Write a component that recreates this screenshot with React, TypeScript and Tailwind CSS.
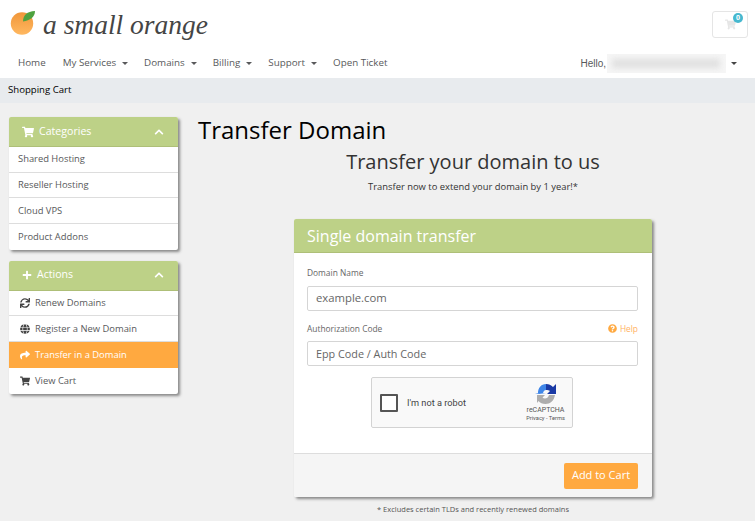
import React from "react";
import { FaShoppingCart, FaChevronUp, FaPlus, FaSync, FaGlobe, FaShare, FaQuestionCircle } from "react-icons/fa";

const NavItem = ({ label, caret, extra }: { label: string; caret?: boolean; extra?: string }) => (
  <span className={"flex items-center text-[9.8px] text-[#58595b] " + (extra ?? "")}>
    {label}
    {caret && <span className="ml-[6px] w-0 h-0 border-x-[3px] border-x-transparent border-t-[3px] border-t-[#58595b]" />}
  </span>
);

const Panel = ({ title, icon, children }: { title: string; icon: React.ReactNode; children: React.ReactNode }) => (
  <div className="w-[169px] bg-white rounded-[2px] shadow-[2px_2px_3px_#888] overflow-hidden">
    <div className="h-[30px] bg-[#bdd187] border-b border-[#aebf78] flex items-center pl-[12px] pr-[14px] text-white text-[10.6px]">
      {icon}
      <span className="flex-1">{title}</span>
      <FaChevronUp className="text-[10px]" />
    </div>
    {children}
  </div>
);

const PanelRow = ({ label, icon, active, last }: { label: string; icon?: React.ReactNode; active?: boolean; last?: boolean }) => (
  <div
    className={
      "h-[25.7px] flex items-center pl-[9px] text-[9.4px] " +
      (active ? "bg-[#ffa940] text-white " : "text-[#58595b] ") +
      (last || active ? "" : "border-b border-[#dddddd]")
    }
  >
    {icon && <span className="w-[17px] shrink-0 flex justify-center pr-[3px] text-[10px] text-[#444]">{icon}</span>}
    {label}
  </div>
);

export default function App() {
  return (
    <div className="min-h-[521px] h-[521px] overflow-hidden bg-[#f0f0f0] font-['Open_Sans',sans-serif]">
      <div className="bg-white h-[78px]">
        <div className="h-[52px] flex items-start justify-between pl-[10px] pr-[7px]">
          <div className="flex items-start pt-[10px]">
            <svg width="28" height="26" viewBox="0 0 28 26">
              <defs>
                <linearGradient id="orangeFill" x1="0" y1="0" x2="0" y2="1">
                  <stop offset="0" stopColor="#f0963a" />
                  <stop offset="1" stopColor="#ffb860" />
                </linearGradient>
              </defs>
              <circle cx="12" cy="13.5" r="11.2" fill="url(#orangeFill)" />
              <path d="M13 11.5 C13 5 17 1.5 25 1 C25 7 20 10.5 13 11.5Z" fill="#4ea23f" />
            </svg>
            <span className="ml-[5px] mt-[-3px] font-['Liberation_Serif',serif] italic text-[27.5px] leading-[36px] text-[#454545]">
              a small orange
            </span>
          </div>
          <div className="relative mt-[11px] w-[36px] h-[27px] border border-[#e5e5e5] rounded-[3px] flex items-center justify-center">
            <FaShoppingCart className="text-[11px] text-[#e6e6e6]" />
            <span className="absolute right-[4px] top-[1px] w-[10px] h-[10px] rounded-full bg-[#46b8cf] text-white text-[7px] leading-[10px] text-center font-bold">
              0
            </span>
          </div>
        </div>
        <div className="flex items-center justify-between h-[22px] pl-[18px] pr-[18px]">
          <div className="flex gap-[16px]">
            <NavItem label="Home" extra="mr-[1px]" />
            <NavItem label="My Services" caret />
            <NavItem label="Domains" caret />
            <NavItem label="Billing" caret />
            <NavItem label="Support" caret />
            <NavItem label="Open Ticket" />
          </div>
          <div className="flex items-center text-[10px] text-[#58595b] font-['Liberation_Sans',sans-serif]">
            Hello,
            <span className="w-[119px] h-[19px] ml-[1px] bg-[#f6f6f6] flex items-center overflow-hidden">
              <span className="block w-[108px] h-[9px] ml-[5px] bg-[#dfdfdf] blur-[3px]" />
            </span>
            <span className="ml-[5px] w-0 h-0 border-x-[3px] border-x-transparent border-t-[3px] border-t-[#444]" />
          </div>
        </div>
      </div>
      <div className="h-[25px] bg-[#e8ebee] flex items-center pl-[8px] text-[9.6px] text-black">Shopping Cart</div>

      <div className="flex pt-[14px] pl-[9px]">
        <div className="flex flex-col gap-[11px] shrink-0">
          <Panel title="Categories" icon={<FaShoppingCart className="text-[12px] mr-[5px] ml-[1px]" />}>
            <PanelRow label="Shared Hosting" />
            <PanelRow label="Reseller Hosting" />
            <PanelRow label="Cloud VPS" />
            <PanelRow label="Product Addons" last />
          </Panel>
          <Panel title="Actions" icon={<FaPlus className="text-[10px] mr-[5px] ml-[1px]" />}>
            <PanelRow label="Renew Domains" icon={<FaSync />} />
            <PanelRow label="Register a New Domain" icon={<FaGlobe />} />
            <PanelRow label="Transfer in a Domain" active icon={<FaShare className="text-white" />} />
            <PanelRow label="View Cart" last icon={<FaShoppingCart />} />
          </Panel>
        </div>

        <div className="ml-[20px] w-[550px]">
          <h1 className="-mt-[2px] text-[24px] leading-[30px] text-black">Transfer Domain</h1>
          <div className="w-[550px] text-center">
            <h2 className="text-[20px] leading-[28px] text-[#333] mt-[3px]">Transfer your domain to us</h2>
            <p className="text-[9.4px] leading-[14px] text-[#333] mt-[4px]">Transfer now to extend your domain by 1 year!*</p>
          </div>
          <div className="ml-[96px] mt-[25px] w-[358px] bg-white rounded-[2px] shadow-[2px_2px_3px_#888] overflow-hidden">
            <div className="h-[34px] bg-[#bdd187] border-b border-[#aebf78] flex items-center pl-[13px] text-white text-[16px]">
              Single domain transfer
            </div>
            <div className="h-[201px] pl-[13px] pr-[14px] pt-[13px] border-b border-[#dddddd]">
              <div className="text-[8.4px] leading-[13px] text-[#666]">Domain Name</div>
              <div className="mt-[7px] h-[25px] border border-[#d5d5d5] rounded-[2px] flex items-center pl-[8px] text-[11.3px] text-[#666]">
                example.com
              </div>
              <div className="mt-[11px] flex justify-between text-[8.4px] leading-[13px]">
                <span className="text-[#666]">Authorization Code</span>
                <span className="flex items-center text-[#ffb264]">
                  <FaQuestionCircle className="mr-[3px] text-[9px] text-[#ffa940]" />
                  Help
                </span>
              </div>
              <div className="mt-[6px] h-[25px] border border-[#d5d5d5] rounded-[2px] flex items-center pl-[8px] pt-[1px] text-[10.8px] text-[#666]">
                Epp Code / Auth Code
              </div>
              <div className="ml-[64px] mt-[11px] w-[202px] h-[51px] bg-[#f9f9f9] border border-[#d3d3d3] rounded-[2px] flex items-center pl-[8px]">
                <span className="w-[18px] h-[18px] bg-white border-2 border-[#555] rounded-[1px]" />
                <span className="ml-[9px] text-[9.2px] text-[#444] font-['Roboto',sans-serif]">I'm not a robot</span>
                <span className="ml-auto w-[53px] flex flex-col items-center font-['Roboto',sans-serif] text-[#555]">
                  <svg width="21" height="20" viewBox="0 0 21 20">
                    <path d="M3 9 C3 4 6 0 11 0 L11 6 C9.5 6 8.5 7 8 9 L11 9 L4 10 L0 9Z" fill="#3f86e8" />
                    <path d="M11 0 C14 0 16 1 18 3 L21 0 L21 10 L12 10 L15 7 C14 6 12.5 6 11 6Z" fill="#1a3aa5" />
                    <path d="M2 11 L10 11 L7.5 13.5 C9 15 13 15 14 11 L20 11 C19 17 15 20 10.5 20 C7.5 20 5 19 3.5 17 L2 19Z" fill="#adadad" />
                  </svg>
                  <span className="text-[7px] leading-[10px] mt-[1px]">reCAPTCHA</span>
                  <span className="text-[5.7px] leading-[7px] whitespace-nowrap">Privacy - Terms</span>
                </span>
              </div>
            </div>
            <div className="h-[43px] bg-[#f5f5f5] flex items-center justify-end pr-[14px]">
              <span className="w-[74px] h-[26px] bg-[#ffa940] rounded-[2px] flex items-center justify-center text-white text-[11px]">
                Add to Cart
              </span>
            </div>
          </div>
          <p className="ml-[96px] w-[358px] mt-[6px] text-center text-[7.5px] leading-[12px] text-[#555]">
            * Excludes certain TLDs and recently renewed domains
          </p>
        </div>
      </div>
    </div>
  );
}
